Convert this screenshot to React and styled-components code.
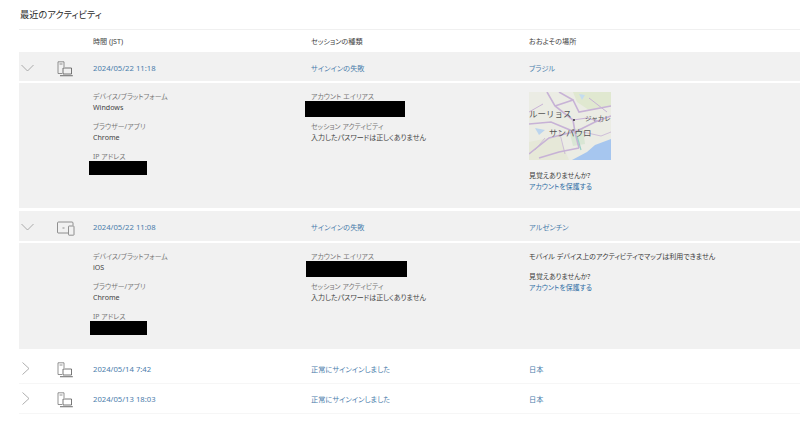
import styled, { createGlobalStyle } from "styled-components";

const GlobalStyle = createGlobalStyle`
  html, body {
    margin: 0;
    padding: 0;
    background: #fff;
  }
  body {
    font-family: "Noto Sans", "Noto Sans CJK JP", sans-serif;
    font-feature-settings: "palt";
    color: #333;
  }
`;

const Page = styled.main`
  box-sizing: border-box;
  width: 800px;
  height: 427px;
  overflow: hidden;
  padding-left: 19px;
`;

const Title = styled.h1`
  margin: 0;
  height: 29px;
  padding-left: 1px;
  font-size: 9.2px;
  font-weight: 400;
  line-height: 29px;
  color: #2a2a2a;
`;

const columns = "38px 36px 218px 218px 1fr";

const HeaderRow = styled.div`
  display: grid;
  grid-template-columns: ${columns};
  align-items: center;
  height: 22px;
  border-top: 1px solid #f0f0f0;
  font-size: 7.1px;
  color: #444;
`;

const Row = styled.div`
  display: grid;
  grid-template-columns: ${columns};
  align-items: center;
  height: ${(p) => p.$height || 30}px;
  margin-top: ${(p) => p.$top || 0}px;
  padding-top: ${(p) => (p.$open ? 2 : 0)}px;
  background: ${(p) => (p.$open ? "#f1f1f1" : "#fff")};
  border-bottom: ${(p) => (p.$open ? "none" : "1px solid #f6f6f6")};
  box-sizing: border-box;
  font-size: 7.2px;
`;

const Toggle = styled.span`
  display: flex;
  padding-left: 2px;
`;

const DeviceCell = styled.span`
  display: flex;
  margin-top: 2px;
`;

const RowLink = styled.a`
  color: #4a7dab;
`;

const DateLink = styled(RowLink)`
  font-size: 7.7px;
`;

const Detail = styled.section`
  display: grid;
  grid-template-columns: 74px 218px 218px 1fr;
  box-sizing: border-box;
  height: ${(p) => p.$height}px;
  margin-top: 2px;
  padding-top: 8px;
  background: #f1f1f1;
  font-size: 6.9px;
  line-height: 11px;
`;

const Column = styled.div`
  display: flex;
  flex-direction: column;
  grid-column: ${(p) => p.$col};
`;

const Field = styled.div`
  min-height: 22px;
  margin-bottom: ${(p) => p.$gap ?? 8}px;
`;

const Label = styled.div`
  color: #777;
`;

const Value = styled.div`
  color: #444;
  font-size: ${(p) => p.$size || 7.1}px;
`;

const Redacted = styled.div`
  position: relative;
  width: ${(p) => p.$width}px;
  height: ${(p) => p.$height}px;
  margin-top: -1px;
  margin-left: ${(p) => p.$offset}px;
  background: #000;
`;

const MapFrame = styled.svg`
  display: block;
  width: 82px;
  height: 68px;
  margin-top: 1px;
  margin-bottom: 10px;
`;

const MapLabel = styled.text`
  font-family: "Noto Sans CJK JP", sans-serif;
  font-feature-settings: normal;
  font-size: ${(p) => p.$size}px;
  fill: #555;
`;

const Note = styled.div`
  margin-bottom: 9px;
  font-size: 7px;
  color: #3a3a3a;
`;

const Question = styled.div`
  color: #3a3a3a;
`;

const ProtectLink = styled.a`
  display: block;
  color: #2f6ea5;
`;

function ChevronDown() {
  return (
    <svg width="13" height="8" viewBox="0 0 13 8" fill="none" stroke="#9a9a9a" strokeWidth="0.8">
      <path d="M0.5 1 L6.5 7 L12.5 1" />
    </svg>
  );
}

function ChevronRight() {
  return (
    <svg width="9" height="13" viewBox="0 0 9 13" fill="none" stroke="#9a9a9a" strokeWidth="0.8">
      <path d="M1.5 0.5 L8 6.5 L1.5 12.5" />
    </svg>
  );
}

function PhoneLaptop() {
  return (
    <svg width="16" height="16" viewBox="0 0 16 16" fill="none" stroke="#777" strokeWidth="0.8">
      <path d="M5 12.5 H1 V0.8 H7 V6" />
      <path d="M2.5 3 H5.5" />
      <path d="M6 7 H14.5 V13 H6 Z" stroke="#555" />
      <path d="M3 14.7 H15.8" strokeWidth="1.1" />
    </svg>
  );
}

function TabletPhone() {
  return (
    <svg width="18" height="15" viewBox="0 0 18 15" fill="none" stroke="#777" strokeWidth="0.8">
      <path d="M11 12 H1 Q0.5 12 0.5 11 V2 Q0.5 1 1.5 1 H15 Q16 1 16 2 V4.5" />
      <rect x="11.5" y="5" width="5.5" height="9.2" rx="0.6" />
      <path d="M5.5 7 H7.5" />
    </svg>
  );
}

function MapThumb() {
  return (
    <MapFrame viewBox="0 0 82 68">
      <rect width="82" height="68" fill="#ebece4" />
      <path d="M44 0 L82 0 L82 14 L60 18 L48 10 Z" fill="#e0e8d0" />
      <path d="M0 50 L30 44 L40 68 L0 68 Z" fill="#e6e8d8" />
      <path d="M40 38 L54 36 L56 52 L44 54 Z" fill="#d9e6d4" />
      <path d="M82 47 L66 53 L58 60 L43 68 L82 68 Z" fill="#a6c6ef" />
      <path d="M6 36 L16 38 L10 43 Z" fill="#bcd5ee" />
      <path d="M50 2 L56 3 L53 8 Z" fill="#c4dcef" />
      <g fill="none" stroke="#c7b2d6" strokeWidth="1.6">
        <path d="M18 0 L26 14 L44 28 L46 40 L50 56" />
        <path d="M26 14 L44 8 L50 20 L82 14" />
        <path d="M0 32 L22 30 L46 40 L66 30 L82 24" />
        <path d="M0 62 L20 46 L44 40" />
        <path d="M44 8 L30 0" />
        <path d="M50 56 L30 60 L10 66" />
        <path d="M60 6 L78 20" strokeWidth="1" />
        <path d="M14 12 L0 20" strokeWidth="1" />
        <path d="M44 28 L58 26 L72 30" strokeWidth="1.2" />
        <path d="M54 40 L72 44 L82 40" strokeWidth="0.8" />
        <path d="M16 46 L6 58" strokeWidth="0.8" />
        <path d="M30 38 L36 62" strokeWidth="0.8" />
      </g>
      <path d="M48 44 L52 58" stroke="#9dd0c8" strokeWidth="1.2" fill="none" />
      <circle cx="45" cy="28" r="0.9" fill="#222" />
      <MapLabel $size={8.5} x="0" y="24.5">ルーリョス</MapLabel>
      <MapLabel $size={6.5} x="56" y="29">ジャカレ</MapLabel>
      <MapLabel $size={8.5} x="20" y="43.5">サンパウロ</MapLabel>
    </MapFrame>
  );
}

function Protect() {
  return (
    <>
      <Question>見覚えありませんか?</Question>
      <ProtectLink>アカウントを保護する</ProtectLink>
    </>
  );
}

function ActivityDetail({ height, platform, alias, ip, location }) {
  return (
    <Detail $height={height}>
      <Column $col="2">
        <Field>
          <Label>デバイス/プラットフォーム</Label>
          <Value>{platform}</Value>
        </Field>
        <Field>
          <Label>ブラウザー/アプリ</Label>
          <Value>Chrome</Value>
        </Field>
        <Field>
          <Label>IP アドレス</Label>
          <Redacted $width={ip.width} $height={14} $offset={ip.offset} />
        </Field>
      </Column>
      <Column $col="3">
        <Field $gap={4}>
          <Label>アカウント エイリアス</Label>
          <Redacted $width={alias.width} $height={16} $offset={alias.offset} />
        </Field>
        <Field>
          <Label>セッション アクティビティ</Label>
          <Value $size={7}>入力したパスワードは正しくありません</Value>
        </Field>
      </Column>
      <Column $col="4">{location}</Column>
    </Detail>
  );
}

export default function App() {
  return (
    <Page>
      <GlobalStyle />
      <Title>最近のアクティビティ</Title>
      <HeaderRow>
        <span />
        <span />
        <span>時間 (JST)</span>
        <span>セッションの種類</span>
        <span>おおよその場所</span>
      </HeaderRow>

      <Row $open $height={29}>
        <Toggle><ChevronDown /></Toggle>
        <DeviceCell><PhoneLaptop /></DeviceCell>
        <DateLink>2024/05/22 11:18</DateLink>
        <RowLink>サインインの失敗</RowLink>
        <RowLink>ブラジル</RowLink>
      </Row>
      <ActivityDetail
        height={125}
        platform="Windows"
        alias={{ width: 100, offset: -6 }}
        ip={{ width: 58, offset: -4 }}
        location={
          <>
            <MapThumb />
            <Protect />
          </>
        }
      />

      <Row $open $top={3}>
        <Toggle><ChevronDown /></Toggle>
        <DeviceCell><TabletPhone /></DeviceCell>
        <DateLink>2024/05/22 11:08</DateLink>
        <RowLink>サインインの失敗</RowLink>
        <RowLink>アルゼンチン</RowLink>
      </Row>
      <ActivityDetail
        height={106}
        platform="iOS"
        alias={{ width: 101, offset: -5 }}
        ip={{ width: 57, offset: -3 }}
        location={
          <>
            <Note>モバイル デバイス上のアクティビティでマップは利用できません</Note>
            <Protect />
          </>
        }
      />

      <Row $top={5}>
        <Toggle><ChevronRight /></Toggle>
        <DeviceCell><PhoneLaptop /></DeviceCell>
        <DateLink>2024/05/14 7:42</DateLink>
        <RowLink>正常にサインインしました</RowLink>
        <RowLink>日本</RowLink>
      </Row>
      <Row>
        <Toggle><ChevronRight /></Toggle>
        <DeviceCell><PhoneLaptop /></DeviceCell>
        <DateLink>2024/05/13 18:03</DateLink>
        <RowLink>正常にサインインしました</RowLink>
        <RowLink>日本</RowLink>
      </Row>
    </Page>
  );
}
